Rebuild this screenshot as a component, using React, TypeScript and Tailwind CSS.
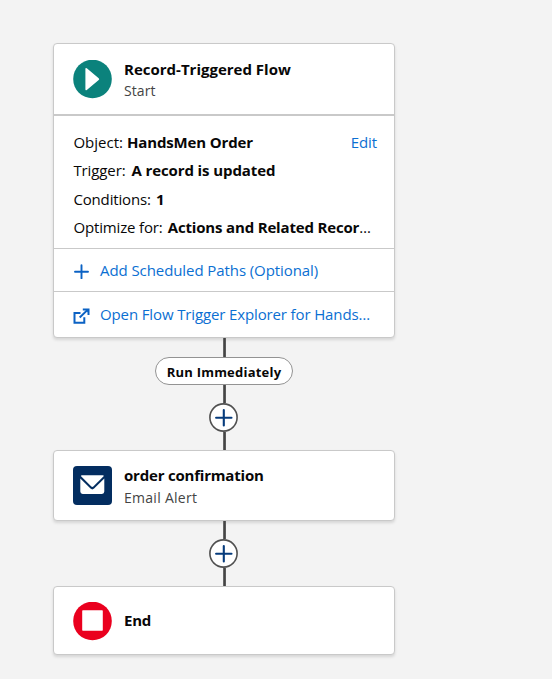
import React from "react";

const card =
  "flex w-[342px] flex-col rounded-[4px] border border-[#c9c9c9] bg-white shadow-[0_2px_3px_rgba(0,0,0,0.12)]";

function Connector({ className }: { className: string }) {
  return <div className={`ml-[170px] w-[3px] bg-linear-to-r from-[#777] via-[#444] to-[#666] ${className}`} />;
}

function AddButton() {
  return (
    <svg className="ml-[156px] block h-[29px] w-[29px] shrink-0" viewBox="0 0 29 29" fill="none">
      <circle cx="14.5" cy="14.5" r="13.6" fill="#fff" stroke="#505050" strokeWidth="1.6" />
      <path d="M14.8 7v15.4M7.1 14.7h15.4" stroke="#063b7c" strokeWidth="2.1" strokeLinecap="round" />
    </svg>
  );
}

function Row({ label, value }: { label: React.ReactNode; value: React.ReactNode }) {
  return (
    <div className="flex whitespace-pre">
      {label}
      {value}
    </div>
  );
}

export default function App() {
  return (
    <div className="flex h-[679px] w-[552px] flex-col bg-[#f3f3f3] pt-[43px] pl-[53px] font-['Open_Sans','Noto_Sans',sans-serif] text-[15px] leading-[20px] text-[#080707]">
      <div className={`${card} h-[295px] shrink-0`}>
        <div className="flex h-[72px] shrink-0 border-b-2 border-[#c9c9c9] pt-4 pl-[19px]">
          <svg className="h-[39px] w-[39px]" viewBox="0 0 39 39">
            <circle cx="19.5" cy="19" r="19.3" fill="#0b827c" />
            <path d="M12.4 9v20.2q0 1.7 1.4.7L25.7 20q1-.9 0-1.8L13.8 8.3q-1.4-1-1.4.7z" fill="#fff" />
          </svg>
          <div className="ml-3 whitespace-nowrap">
            <div className="-mt-px h-[22px] text-[15px] font-bold">Record-Triggered Flow</div>
            <div className="text-[14px] tracking-[0.1px] text-[#444]">Start</div>
          </div>
        </div>
        <div className="flex h-[132px] shrink-0 flex-col gap-[8.4px] pt-4 pl-[19.4px] pr-[17px]">
          <div className="flex justify-between">
            <Row label={<span className="w-[53.6px]">Object:</span>} value={<b className="tracking-[-0.15px]">HandsMen Order</b>} />
            <span className="tracking-[-0.1px] text-[#0b6fd2]">Edit</span>
          </div>
          <Row label={<span className="w-[58px] tracking-[-0.1px]">Trigger:</span>} value={<b className="tracking-[-0.1px]">A record is updated</b>} />
          <Row label={<span className="w-[82.6px] tracking-[-0.15px]">Conditions:</span>} value={<b>1</b>} />
          <Row label={<span className="w-[94.4px] tracking-[-0.15px]">Optimize for:</span>} value={<span><b className="tracking-[-0.17px]">Actions and Related Recor</b>…</span>} />
        </div>
        <div className="flex h-[43px] shrink-0 items-center border-t border-[#c9c9c9] pl-[20px] text-[#0b6fd2]">
          <svg className="mt-[3px] h-[15px] w-[15px]" viewBox="0 0 15 15" fill="none">
            <path d="M7.5 1.3v13M1 7.8h13" stroke="#0b62c4" strokeWidth="1.9" strokeLinecap="round" />
          </svg>
          <span className="ml-[11px] whitespace-nowrap tracking-[-0.08px]">Add Scheduled Paths (Optional)</span>
        </div>
        <div className="flex h-[46px] shrink-0 items-center border-t border-[#c9c9c9] pl-[19px] text-[#0b6fd2]">
          <svg className="mt-[3px] h-[16px] w-[17px]" viewBox="0 0 17 16" fill="none" stroke="#0b62c4" strokeWidth="2">
            <path d="M7.5 5H1.5v9.8h9.8V9.2M6.7 9.5l7.6-7.4" />
            <path d="M9.8 1.4h5.7v5.6" />
            <path d="M11.5 1H16v4.5z" fill="#0b62c4" stroke="none" />
          </svg>
          <span className="-mt-px ml-[10px] whitespace-nowrap tracking-[-0.13px]">Open Flow Trigger Explorer for Hands…</span>
        </div>
      </div>
      <Connector className="h-[19px] shrink-0" />
      <div className="ml-[102px] flex h-[28px] w-[138px] shrink-0 items-center justify-center whitespace-nowrap rounded-full border border-[#939393] bg-white pt-[2px] text-[13px] font-bold tracking-[0.22px]">
        Run Immediately
      </div>
      <Connector className="h-[18px] shrink-0" />
      <AddButton />
      <Connector className="h-[18px] shrink-0" />
      <div className={`${card} h-[71px] shrink-0`}>
        <div className="flex pt-[15px] pl-[19px]">
          <svg className="h-[39px] w-[39px]" viewBox="0 0 39 39">
            <rect width="39" height="39" rx="4" fill="#032d60" />
            <path d="M9 9.3h20.7q1 0 1.2.8l-10.6 10.5q-1 .9-2 0L7.8 10.1q.2-.8 1.2-.8z" fill="#fff" />
            <path d="M7.3 12.6l10.2 10q1.8 1.6 3.6 0l10.2-10v13q0 2.4-2.4 2.4H9.7q-2.4 0-2.4-2.4z" fill="#fff" />
          </svg>
          <div className="ml-3 whitespace-nowrap">
            <div className="-mt-px h-[23px] font-bold tracking-[-0.2px]">order confirmation</div>
            <div className="text-[14px] tracking-[0.28px] text-[#444]">Email Alert</div>
          </div>
        </div>
      </div>
      <Connector className="h-[18px] shrink-0" />
      <AddButton />
      <Connector className="h-[18px] shrink-0" />
      <div className={`${card} h-[69px] shrink-0`}>
        <div className="flex pt-[15px] pl-[19px]">
          <svg className="h-[39px] w-[39px]" viewBox="0 0 39 39">
            <circle cx="19.5" cy="19" r="19.3" fill="#ea001e" />
            <rect x="9.2" y="8.2" width="20.6" height="20.6" rx="0.7" fill="#fff" />
          </svg>
          <div className="ml-3 mt-2 font-bold tracking-[-0.2px]">End</div>
        </div>
      </div>
    </div>
  );
}
